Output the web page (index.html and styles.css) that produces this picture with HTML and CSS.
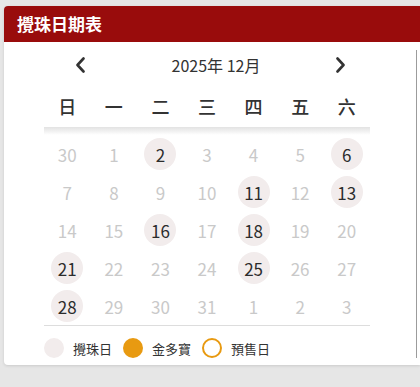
FILE: index.html
```html
<!DOCTYPE html>
<html lang="zh-Hant">
<head>
<meta charset="utf-8">
<title>攪珠日期表</title>
<link rel="stylesheet" href="styles.css">
</head>
<body>
<section class="card">
  <header class="card-head">攪珠日期表</header>
  <div class="card-body">
    <div class="calendar">
      <div class="nav">
        <button class="nav-btn" aria-label="上一月">
          <svg width="10" height="16" viewBox="0 0 10 16"><path d="M8.5 1.5 L2.5 8 L8.5 14.5" fill="none" stroke="#333" stroke-width="2.6" stroke-linecap="round" stroke-linejoin="round"/></svg>
        </button>
        <div class="nav-title">2025年 12月</div>
        <button class="nav-btn" aria-label="下一月">
          <svg width="10" height="16" viewBox="0 0 10 16"><path d="M1.5 1.5 L7.5 8 L1.5 14.5" fill="none" stroke="#333" stroke-width="2.6" stroke-linecap="round" stroke-linejoin="round"/></svg>
        </button>
      </div>
      <div class="weekdays">
        <span>日</span><span>一</span><span>二</span><span>三</span><span>四</span><span>五</span><span>六</span>
      </div>
      <div class="shade"></div>
      <div class="days">
        <span class="day">30</span><span class="day">1</span><span class="day draw">2</span><span class="day">3</span><span class="day">4</span><span class="day">5</span><span class="day draw">6</span>
        <span class="day">7</span><span class="day">8</span><span class="day">9</span><span class="day">10</span><span class="day draw">11</span><span class="day">12</span><span class="day draw">13</span>
        <span class="day">14</span><span class="day">15</span><span class="day draw">16</span><span class="day">17</span><span class="day draw">18</span><span class="day">19</span><span class="day">20</span>
        <span class="day draw">21</span><span class="day">22</span><span class="day">23</span><span class="day">24</span><span class="day draw">25</span><span class="day">26</span><span class="day">27</span>
        <span class="day draw">28</span><span class="day">29</span><span class="day">30</span><span class="day">31</span><span class="day">1</span><span class="day">2</span><span class="day">3</span>
      </div>
      <div class="legend">
        <span class="dot dot-draw"></span><span class="legend-label">攪珠日</span>
        <span class="dot dot-jackpot"></span><span class="legend-label">金多寶</span>
        <span class="dot dot-presale"></span><span class="legend-label">預售日</span>
      </div>
    </div>
    <div class="aside"></div>
  </div>
</section>
</body>
</html>
```
FILE: styles.css
```css
html, body {
  margin: 0;
  padding: 0;
}

body {
  background: #e6e6e6;
  width: 420px;
  height: 387px;
  overflow: hidden;
  font-family: "Noto Sans CJK TC", "Noto Sans", sans-serif;
  color: #333;
}

.card {
  margin: 6px 0 0 4px;
  width: 416px;
  background: #fff;
  border-radius: 4px 0 0 4px;
  box-shadow: 0 1px 3px rgba(0, 0, 0, 0.12);
  overflow: hidden;
}

.card-head {
  height: 36px;
  background: #990c0c;
  color: #fff;
  font-size: 17px;
  font-weight: 700;
  line-height: 36px;
  padding-left: 13px;
}

.card-body {
  display: flex;
  padding: 8px 0 7px 40px;
}

.calendar {
  width: 326px;
}

.aside {
  flex: 1;
  margin-left: 46px;
  border-left: 1px solid #9c9c9c;
}

.nav {
  display: flex;
  align-items: center;
  height: 30px;
  padding: 0 24px 0 31px;
}

.nav-btn {
  border: 0;
  background: none;
  padding: 0;
  width: 10px;
  height: 16px;
  display: flex;
}

.nav-title {
  flex: 1;
  text-align: center;
  font-size: 16px;
  padding-left: 11px;
  line-height: 30px;
}

.weekdays {
  display: grid;
  grid-template-columns: repeat(7, 1fr);
  height: 42px;
  align-items: center;
  margin-top: 5px;
  font-size: 18px;
  font-weight: 500;
  text-align: center;
}

.shade {
  height: 8px;
  background: linear-gradient(#e2e2e2, #fff);
}

.days {
  display: grid;
  grid-template-columns: repeat(7, 1fr);
  grid-auto-rows: 38px;
  border-bottom: 1px solid #ddd;
}

.day {
  justify-self: center;
  align-self: center;
  width: 32px;
  height: 32px;
  border-radius: 50%;
  display: flex;
  align-items: center;
  justify-content: center;
  font-size: 17px;
  color: #c9c9c9;
}

.day.draw {
  background: #f2ecec;
  color: #2c2c2c;
}

.legend {
  display: flex;
  align-items: center;
  margin-top: 12px;
  height: 20px;
}

.dot {
  width: 20px;
  height: 20px;
  border-radius: 50%;
  box-sizing: border-box;
  flex: none;
}

.dot-draw {
  background: #f2ecec;
}

.dot-jackpot {
  background: #e89a11;
}

.dot-presale {
  border: 2px solid #e89a11;
}

.legend-label {
  font-size: 13px;
  color: #333;
  margin: 0 11px 0 9px;
}
```
